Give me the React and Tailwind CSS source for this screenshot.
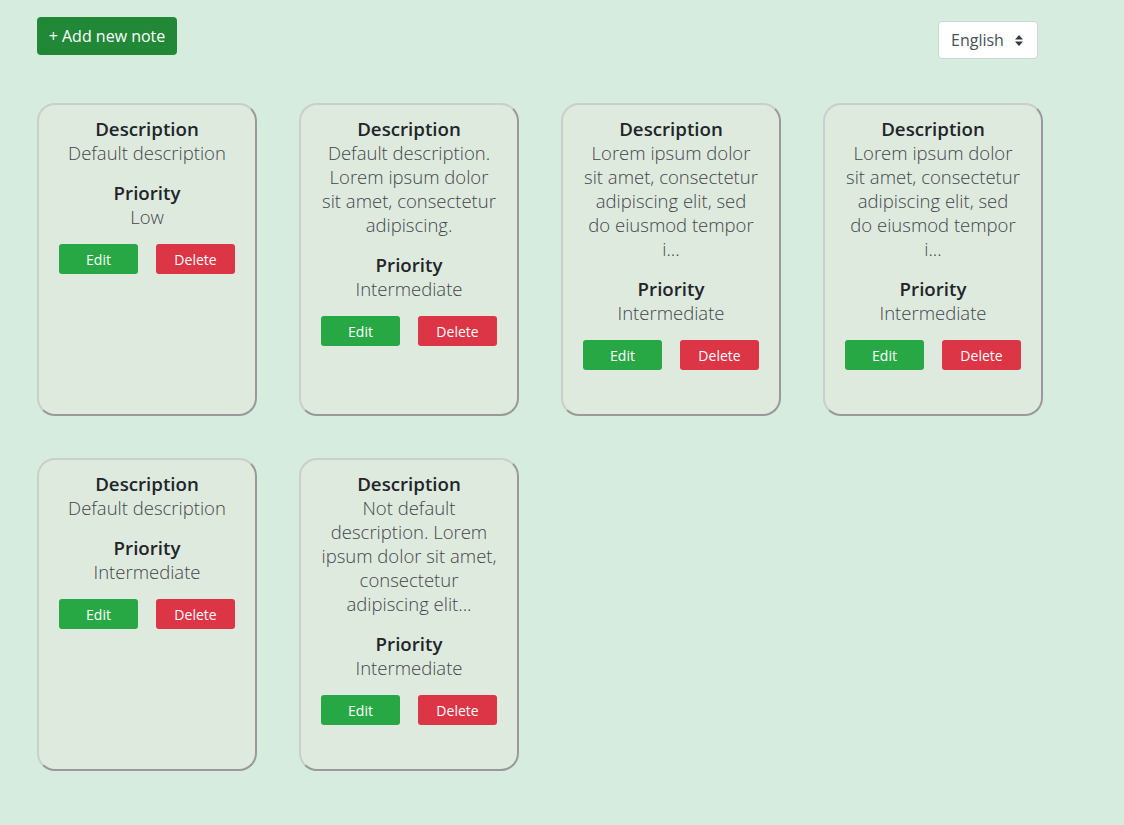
const NOTES = [
  { description: 'Default description', priority: 'Low' },
  { description: 'Default description. Lorem ipsum dolor sit amet, consectetur adipiscing.', priority: 'Intermediate' },
  { description: 'Lorem ipsum dolor sit amet, consectetur adipiscing elit, sed do\u00a0eiusmod tempor i...', priority: 'Intermediate' },
  { description: 'Lorem ipsum dolor sit amet, consectetur adipiscing elit, sed do\u00a0eiusmod tempor i...', priority: 'Intermediate' },
  { description: 'Default description', priority: 'Intermediate' },
  { description: 'Not default description. Lorem ipsum dolor sit amet, consectetur adipiscing elit...', priority: 'Intermediate' },
];

function NoteCard({ note }) {
  return (
    <div className="w-[220px] h-[313px] rounded-[18px] border-2 border-t-[#c9cfca] border-l-[#c9cfca] border-r-[#999] border-b-[#999] bg-[#dfeadf] px-[18px] pt-[12px] text-center">
      <h5 className="text-[18.7px] leading-[24px] font-semibold text-[#212529]">Description</h5>
      <p className="text-[18.5px] leading-[24px] font-light text-[#3f464b]">{note.description}</p>
      <h5 className="mt-4 text-[18.7px] leading-[24px] font-semibold text-[#212529]">Priority</h5>
      <p className="text-[18.5px] leading-[24px] font-light text-[#3f464b]">{note.priority}</p>
      <div className="mt-[15px] flex justify-center gap-[18px]">
        <button className="w-[79px] h-[30px] rounded-[3px] bg-[#28a745] text-[14px] text-white">Edit</button>
        <button className="w-[79px] h-[30px] rounded-[3px] bg-[#dc3545] text-[14px] text-white">Delete</button>
      </div>
    </div>
  );
}

export default function App() {
  return (
    <div className="min-h-[825px] bg-[#d5ecdf] pl-[37px] pt-[17px] font-['Open_Sans',sans-serif]">
      <div className="flex w-[1001px] items-start justify-between">
        <button className="h-[38px] w-[140px] rounded-[4px] bg-[#218838] text-[16px] text-white">+ Add new note</button>
        <div className="mt-[4px] flex h-[38px] w-[100px] items-center justify-between rounded-[4px] border border-[#ced4da] bg-white pl-[12px] pr-[14px] text-[16px] text-[#495057]">
          <span>English</span>
          <svg width="8" height="11" viewBox="0 0 8 11">
            <path d="M4 0 L8 4.5 H0 Z M4 11 L0 6.5 H8 Z" fill="#343a40" />
          </svg>
        </div>
      </div>
      <div className="mt-[44px] flex w-[1010px] flex-wrap gap-x-[42px] gap-y-[42px]">
        {NOTES.map((n, i) => (
          <NoteCard key={i} note={n} />
        ))}
      </div>
    </div>
  );
}
